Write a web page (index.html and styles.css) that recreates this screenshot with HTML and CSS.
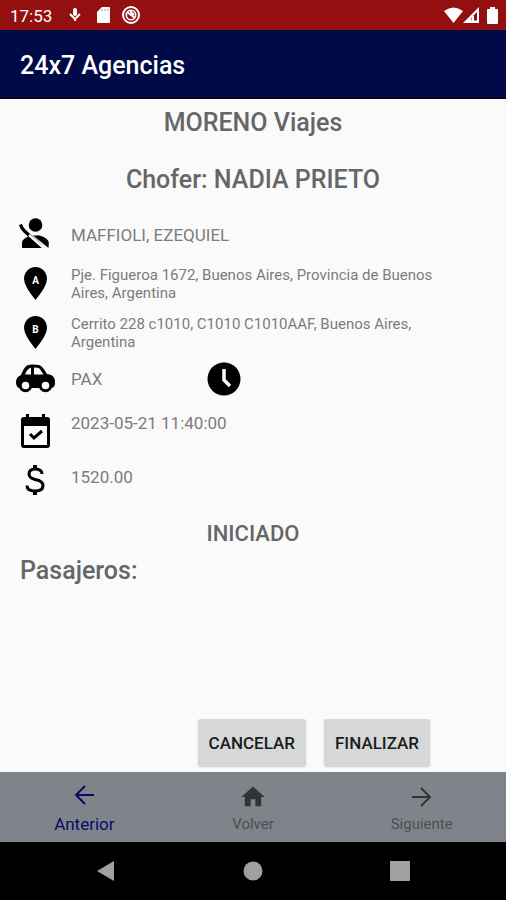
FILE: index.html
```
<!DOCTYPE html>
<html lang="es">
<head>
  <meta charset="UTF-8">
  <meta name="viewport" content="width=device-width, initial-scale=1.0">
  <title>24x7 Agencias</title>
  <link rel="stylesheet" href="styles.css">
</head>
<body>

  <div class="status-bar">
    <span class="time">17:53</span>
    <svg class="mic" width="12" height="14" viewBox="0 0 12 14"><rect x="4" y="0" width="4" height="8" rx="2" fill="#fff"/><path d="M1 6l5 5 5-5M6 10v3" fill="none" stroke="#fff" stroke-width="2"/></svg>
    <svg class="sd" width="14" height="16" viewBox="0 0 14 16"><path d="M5 0h7q1 0 1 1v14q0 1-1 1H1q-1 0-1-1V5z" fill="#fff"/><path d="M5 2v2M8 2v2M11 2v2" stroke="#940f10" opacity=".5"/></svg>
    <svg width="18" height="18" viewBox="0 0 18 18" fill="none" stroke="#fff"><circle cx="9" cy="9" r="8" stroke-width="2"/><circle cx="9" cy="9" r="4.7" stroke-width="1.6"/><path d="M5 6l8 6M8 5l4 4" stroke-width="2"/></svg>
    <span class="spacer"></span>
    <svg width="19" height="16" viewBox="0 0 19 16"><path d="M0 4Q9.500-3 19 4L9.500 16z" fill="#fff"/></svg>
    <svg width="16" height="16" viewBox="0 0 16 16"><path fill="#fff" fill-rule="evenodd" d="M16 0v16H0zM14 5L8.500 10.500v3H14z"/><path d="M10 9v5" stroke="#fff" stroke-width="2"/></svg>
    <svg class="battery" width="11" height="17" viewBox="0 0 11 17"><path d="M3 0h5v2h2q1 0 1 1v13q0 1-1 1H1q-1 0-1-1V3q0-1 1-1h2z" fill="#fff"/></svg>
  </div>

  <header class="app-bar">
    <h1>24x7 Agencias</h1>
  </header>

  <main>
    <h2 class="agency">MORENO Viajes</h2>
    <h2 class="driver">Chofer: NADIA PRIETO</h2>

    <ul class="details">
      <li>
        <svg width="40" height="36" viewBox="0 0 40 36"><circle cx="20.500" cy="8" r="6.800"/><path d="M7 31v-5q0-5 9-7.500h8q9.500 2.500 9.500 7.500v5z"/><path d="M17 16l18 17" stroke="#fafafa" stroke-width="3.500"/><path d="M5.500 7.500q1 4 4 6.500l7.500 7" fill="none" stroke="#000" stroke-width="3.200"/><path d="M14 18l17 15" stroke="#fafafa" stroke-width="2.500"/><path d="M18 18.500h5q9 1.500 10.500 6.500v6z"/></svg>
        <span>MAFFIOLI, EZEQUIEL</span>
      </li>
      <li class="address">
        <svg width="40" height="34" viewBox="0 0 40 34"><path d="M20.500 0C14 0 9 5 9 12q0 7 11.500 21Q32 19 32 12C32 5 27 0 20.500 0z"/><text x="20.500" y="17" text-anchor="middle">A</text></svg>
        <span>Pje. Figueroa 1672, Buenos Aires, Provincia de Buenos Aires, Argentina</span>
      </li>
      <li class="address">
        <svg width="40" height="34" viewBox="0 0 40 34"><path d="M20.500 0C14 0 9 5 9 12q0 7 11.500 21Q32 19 32 12C32 5 27 0 20.500 0z"/><text x="20.500" y="17" text-anchor="middle">B</text></svg>
        <span>Cerrito 228 c1010, C1010 C1010AAF, Buenos Aires, Argentina</span>
      </li>
      <li class="service">
        <svg width="40" height="30" viewBox="0 0 40 30"><path d="M6 11Q9 3 12 1.500q4-1.500 12-.5 3 .5 8 9 5 .5 6.500 3 1.500 2 1.500 6 0 4-3 5H4q-3-1-3-6 0-5 5-7z"/><path d="M10 10.500Q12 5 16 3.500v7zM19 3.500q4 0 5.500 1l4 6H19z" fill="#fafafa"/><circle cx="10.500" cy="21.500" r="5.300" fill="#fafafa" stroke="#000" stroke-width="3"/><circle cx="30.500" cy="21.500" r="5.300" fill="#fafafa" stroke="#000" stroke-width="3"/></svg>
        <span>PAX</span>
        <svg width="34" height="34" viewBox="0 0 34 34"><circle cx="17" cy="17" r="16.500"/><path d="M17 7v11l6 6" fill="none" stroke="#fafafa" stroke-width="3.500"/></svg>
      </li>
      <li class="date">
        <svg width="40" height="34" viewBox="0 0 40 34"><path fill-rule="evenodd" d="M11 0h3v3h13V0h3v3h2q3 0 3 3v25q0 3-3 3H9q-3 0-3-3V6q0-3 3-3h2zM9 12v19h23V12z"/><path d="M15 20l4 4 8-7" fill="none" stroke="#000" stroke-width="3"/></svg>
        <span>2023-05-21 11:40:00</span>
      </li>
      <li class="price">
        <svg width="40" height="30" viewBox="0 0 40 30" fill="none" stroke="#000"><path d="M27 9q0-5-7-5-6 0-6 5 0 4 6 5.500 8 1.500 8 6 0 5.500-8 5.500-8 0-8-5.500" stroke-width="3"/><path d="M20 0v5M20 25v5" stroke-width="4"/></svg>
        <span>1520.00</span>
      </li>
    </ul>

    <p class="state">INICIADO</p>
    <h2 class="passengers">Pasajeros:</h2>

    <div class="actions">
      <button type="button">CANCELAR</button>
      <button type="button">FINALIZAR</button>
    </div>
  </main>

  <nav class="bottom-nav">
    <a class="active" href="#anterior">
      <svg width="24" height="24" viewBox="0 0 24 24"><path d="M22 12H4M13 3l-9 9 9 9" fill="none" stroke="currentColor" stroke-width="2"/></svg>
      Anterior
    </a>
    <a href="#volver">
      <svg width="28" height="28" viewBox="0 0 24 24"><path d="M10 20v-6h4v6h5v-8h3L12 3 2 12h3v8z" fill="#303438"/></svg>
      Volver
    </a>
    <a href="#siguiente">
      <svg width="24" height="28" viewBox="0 0 24 28"><path d="M2 14h18M11 5l9 9-9 9" fill="none" stroke="#303438" stroke-width="2"/></svg>
      Siguiente
    </a>
  </nav>

  <div class="system-nav">
    <button type="button" aria-label="Atrás"><svg width="20" height="22" viewBox="0 0 20 22"><path d="M18 1v20L1 11z"/></svg></button>
    <button type="button" aria-label="Inicio"><svg width="20" height="20" viewBox="0 0 20 20"><circle cx="10" cy="10" r="9.500"/></svg></button>
    <button type="button" aria-label="Recientes"><svg width="20" height="20" viewBox="0 0 20 20"><rect width="20" height="20" rx="1"/></svg></button>
  </div>

</body>
</html>
```
FILE: styles.css
```
* {
  box-sizing: border-box;
}
body {
  margin: 0;
  min-height: 100vh;
  display: flex;
  flex-direction: column;
  font-family: Roboto, sans-serif;
  background-color: #fafafa;
  color: #7c7c7c;
}
h1, h2, p, ul {
  margin: 0;
  padding: 0;
}
svg {
  flex: none;
}

/* barra de estado */
.status-bar {
  display: flex;
  align-items: center;
  height: 30px;
  padding: 0 8px 0 10px;
  background-color: #940f10;
  color: #fff;
}
.time {
  font-size: 17px;
  line-height: 20px;
  margin-top: 2px;
}
.mic {
  margin-left: 17px;
}
.sd {
  margin: 0 11px 0 16px;
}
.spacer {
  flex: 1;
}
.battery {
  margin-left: 8px;
}

.app-bar {
  display: flex;
  align-items: center;
  height: 69px;
  padding: 4px 20px 0;
  background-color: #000a47;
  border-bottom: 2px solid #08081c;
  color: #fff;
}
h1 {
  font-size: 25px;
  font-weight: 500;
  line-height: 28px;
}

main {
  flex: 1;
  display: flex;
  flex-direction: column;
  padding: 10px 0 6px;
}
h2 {
  font-size: 25px;
  font-weight: 500;
  line-height: 28px;
  color: #666;
}
.agency, .driver, .state {
  text-align: center;
}
.driver {
  margin: 29px 0 16px;
}

/* datos del viaje */
.details {
  list-style: none;
}
.details li {
  display: grid;
  grid-template-columns: 40px 1fr;
  column-gap: 16px;
  align-items: center;
  height: 49px;
  padding: 0 60px 0 15px;
  font-size: 17px;
  line-height: 20px;
}
.details .address {
  font-size: 15px;
  line-height: 18px;
}
.details .service {
  grid-template-columns: 40px 120px 1fr;
  padding-bottom: 6px;
}
.details .price span {
  padding-bottom: 6px;
}
.details .date span {
  align-self: start;
  padding-top: 7px;
}
.address text {
  font-size: 10px;
  font-weight: 700;
  fill: #fff;
}

.state {
  margin-top: 16px;
  font-size: 22px;
  font-weight: 500;
  line-height: 28px;
  color: #666;
}
.passengers {
  margin-top: 9px;
  padding: 0 20px;
}

.actions {
  display: flex;
  justify-content: flex-end;
  gap: 18px;
  margin-top: auto;
  padding: 0 76px;
}
.actions button {
  height: 47px;
  padding: 0 11px;
  border: none;
  border-radius: 3px;
  background-color: #d6d7d7;
  box-shadow: 0 1px 2px rgba(0, 0, 0, 0.2);
  font-family: inherit;
  font-size: 17px;
  font-weight: 500;
  color: #1c1c1c;
}

.bottom-nav {
  display: flex;
  height: 70px;
  background-color: #7e848a;
}
.bottom-nav a {
  flex: 1;
  display: flex;
  flex-direction: column;
  align-items: center;
  justify-content: space-between;
  padding: 11px 0 8px;
  font-size: 15px;
  line-height: 20px;
  color: #4b4f55;
  text-decoration: none;
}
.bottom-nav .active {
  font-size: 17px;
  color: #0a0a66;
}

.system-nav {
  display: flex;
  height: 58px;
  padding: 0 32px;
  background-color: #000;
}
.system-nav button {
  flex: 1;
  display: flex;
  align-items: center;
  justify-content: center;
  padding: 0;
  border: none;
  background: none;
}
.system-nav svg {
  fill: #a0a0a0;
}
```
